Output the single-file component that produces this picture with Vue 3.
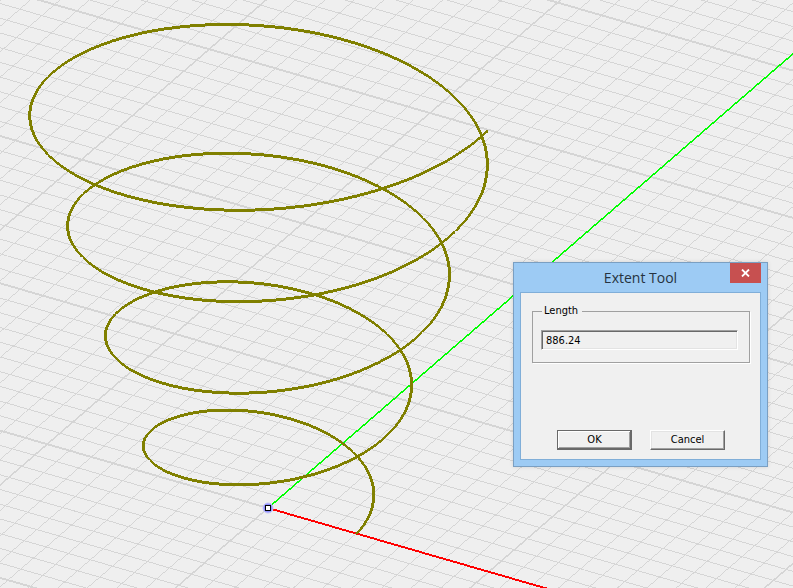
<script setup>
import { ref } from 'vue'

const length = ref('886.24')
const open = ref(true)

// Parallel projection: screen vectors of one major grid cell along X and Y.
const origin = { x: 268, y: 508 }
const u = { x: 220.8, y: 63.8 }
const v = { x: 127.6, y: -110.4 }
const project = (a, b, z = 0) => [
  origin.x + a * u.x + b * v.x,
  origin.y + a * u.y + b * v.y - z
]

// Each segment becomes a quad whose thickness is measured along its minor axis.
function quad(p, q, w) {
  const h = w / 2
  const wide = Math.abs(q[0] - p[0]) >= Math.abs(q[1] - p[1])
  const k = wide ? 0 : 1
  const [s, e] = p[k] <= q[k] ? [p, q] : [q, p]
  const pts = wide
    ? [[s[0], s[1] - h], [e[0], e[1] - h], [e[0], e[1] + h], [s[0], s[1] + h]]
    : [[s[0] - h, s[1]], [s[0] + h, s[1]], [e[0] + h, e[1]], [e[0] - h, e[1]]]
  return 'M' + pts.map((c) => c[0].toFixed(2) + ' ' + c[1].toFixed(2)).join('L') + 'Z'
}

const span = 12
let minor = ''
let major = ''
for (let i = -span * 10; i <= span * 10; i++) {
  const t = i / 10
  const lines = [
    [project(-span, t), project(span, t)],
    [project(t, -span), project(t, span)]
  ]
  for (const [p, q] of lines) {
    if (i % 10 === 0) major += quad(p, q, 2)
    else minor += quad(p, q, 1)
  }
}

const xAxis = quad(project(0, 0), project(span, 0), 2)
const yAxis = quad(project(0, 0), project(0, span), 2)

// Conical helix around the vertical axis.
const turns = 4
const steps = 480
const helixPoint = (i) => {
  const t = (i / steps) * turns
  const r = 0.402 + 0.1485 * t
  const a = t * 2 * Math.PI
  return project(r * Math.cos(a), r * Math.sin(a), 110.2 * t)
}
let helix = ''
for (let i = 0; i < steps; i++) helix += quad(helixPoint(i), helixPoint(i + 1), 3)
</script>

<template>
  <main class="viewport">
    <svg class="scene" aria-hidden="true">
      <g shape-rendering="crispEdges">
        <path class="grid" :d="minor" />
        <path class="grid" :d="major" />
        <path class="axis-y" :d="yAxis" />
        <path class="axis-x" :d="xAxis" />
        <path class="helix" :d="helix" />
      </g>
      <circle class="halo" cx="268" cy="508" r="5" />
      <rect class="handle" x="265.5" y="505.5" width="5" height="5" />
    </svg>

    <form v-if="open" class="dialog" role="dialog" aria-labelledby="title" @submit.prevent="open = false">
      <header class="titlebar">
        <h1 id="title">Extent Tool</h1>
        <button class="close" type="button" aria-label="Close" @click="open = false">
          <svg width="9" height="8" viewBox="0 0 9 8">
            <path d="M1 0.5L8 7.5M8 0.5L1 7.5" stroke="#fff" stroke-width="1.8" />
          </svg>
        </button>
      </header>
      <div class="body">
        <fieldset>
          <legend><label for="length">Length</label></legend>
          <input id="length" v-model="length" type="text" readonly />
        </fieldset>
        <div class="actions">
          <button class="btn default" type="submit">OK</button>
          <button class="btn" type="button" @click="open = false">Cancel</button>
        </div>
      </div>
    </form>
  </main>
</template>

<style>
body {
  margin: 0;
  background: #efefef;
}
</style>

<style scoped>
.viewport {
  position: relative;
  height: 100vh;
  overflow: hidden;
  background: #efefef;
  font-family: "DejaVu Sans Condensed", "Noto Sans", sans-serif;
  font-size: 11px;
  line-height: 14px;
  color: #000;
}
.scene {
  display: block;
  width: 100%;
  height: 100%;
}
.grid { fill: #d5d5d5; }
.axis-x { fill: #ff0000; }
.axis-y { fill: #00ff00; }
.helix { fill: #808000; }
.halo { fill: #8f8fff; stroke: #c4c4fa; stroke-width: 1; }
.handle { fill: #fff; stroke: #000; stroke-width: 1; shape-rendering: crispEdges; }

.dialog {
  position: absolute;
  left: 513px;
  top: 262px;
  box-sizing: border-box;
  width: 255px;
  padding: 0 6px 6px;
  border: 1px solid #7a9fc2;
  background: #9dcbf4;
  box-shadow: 0 0 4px rgba(0, 0, 0, 0.12);
}
.titlebar {
  position: relative;
  display: flex;
  justify-content: center;
  height: 29px;
}
h1 {
  margin: 0;
  font: 400 14px/30px "Open Sans", sans-serif;
  color: #263340;
}
.close {
  position: absolute;
  top: 0;
  right: 0;
  display: flex;
  align-items: center;
  justify-content: center;
  width: 31px;
  height: 20px;
  padding: 0;
  border: 0;
  background: #c75050;
}
.body {
  padding: 11px 10px 9px 11px;
  border: 1px solid #80aed8;
  background: #f0f0f0;
}
fieldset {
  margin: 0 0 67px;
  padding: 12px 11px 12px 8px;
  border: 1px solid #a0a0a0;
  box-shadow: 1px 1px 0 #fff;
}
legend {
  margin-left: 1px;
  padding: 0 4px 0 2px;
}
input {
  display: block;
  box-sizing: border-box;
  width: 100%;
  height: 20px;
  padding: 0 4px;
  border: 1px solid;
  border-color: #a0a0a0 #fff #fff #a0a0a0;
  outline: none;
  background: #f0f0f0;
  box-shadow: inset 1px 1px 0 #696969, inset -1px -1px 0 #e3e3e3;
  font: inherit;
  color: inherit;
}
.actions {
  display: flex;
  justify-content: center;
  gap: 18px;
}
.btn {
  box-sizing: border-box;
  width: 75px;
  height: 20px;
  padding: 0;
  border: 1px solid;
  border-color: #fff #696969 #696969 #fff;
  background: #f0f0f0;
  box-shadow: inset -1px -1px 0 #a0a0a0, inset 1px 1px 0 #e3e3e3;
  font: inherit;
  color: inherit;
}
.default {
  border-color: #696969;
  box-shadow: inset -1px -1px 0 #696969, inset 1px 1px 0 #fff, inset -2px -2px 0 #a0a0a0;
}
</style>
